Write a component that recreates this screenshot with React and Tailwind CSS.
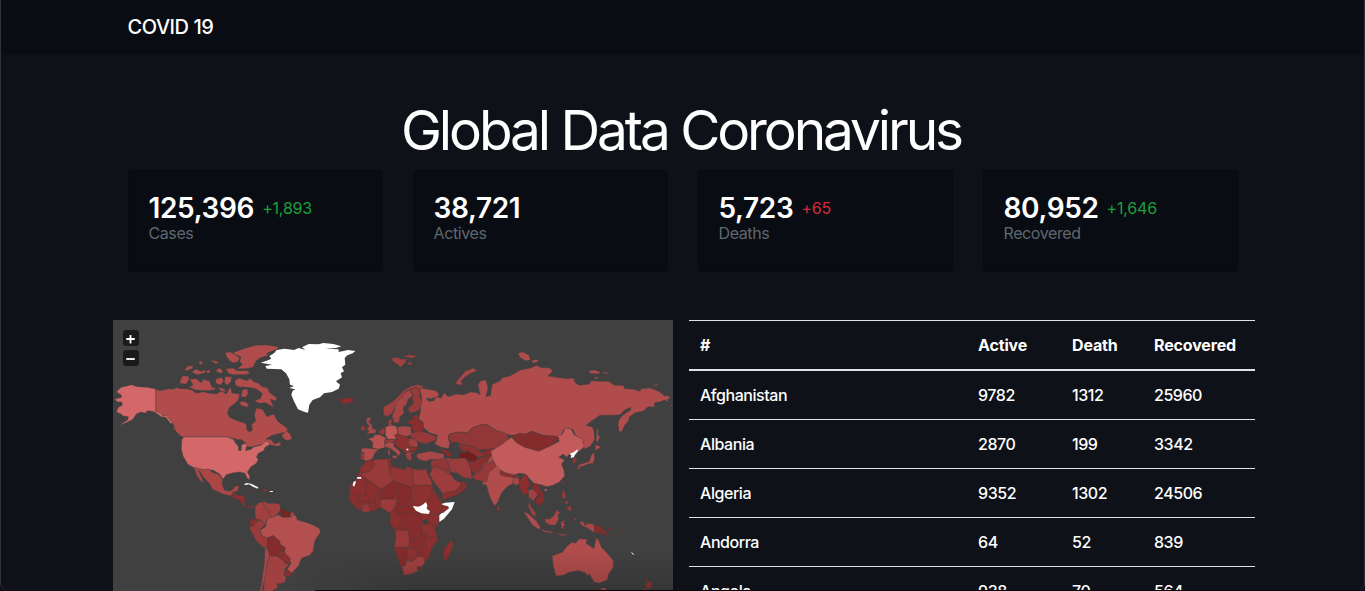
import React from "react";

const STATS = [
  { value: "125,396", delta: "+1,893", tone: "text-[#1ea03a]", label: "Cases" },
  { value: "38,721", label: "Actives" },
  { value: "5,723", delta: "+65", tone: "text-[#d22d3d]", label: "Deaths" },
  { value: "80,952", delta: "+1,646", tone: "text-[#1ea03a]", label: "Recovered" },
];

const ROWS = [
  ["Afghanistan", 9782, 1312, 25960],
  ["Albania", 2870, 199, 3342],
  ["Algeria", 9352, 1302, 24506],
  ["Andorra", 64, 52, 839],
  ["Angola", 938, 70, 564],
];

// Each region is a sheet of [fill, polygon points...] placed at its own offset.
const SHEETS = [
  {
    // North America
    at: "translate(0 0)",
    shapes: [
      ["#b04c4c", "128,207 142,212 168,206 180,208 190,203 204,206 222,206 238,211 250,220 270,215 285,219 310,222 325,213 340,222 352,200 358,220 380,222 376,240 366,250 350,262 343,280 350,292 372,302 392,308 400,312 402,330 410,336 418,330 416,314 428,302 424,284 430,264 448,268 462,290 482,282 494,304 522,324 524,336 502,340 478,346 458,358 474,358 484,372 502,366 504,376 490,379 472,374 462,368 444,374 424,378 404,390 396,370 382,368 372,358 344,351 212,351 206,350 188,334 180,312 160,290 140,284 128,276"],
      ["#b04c4c", "506,346 520,332 532,342 537,356 524,362 512,356"],
      ["#b04c4c", "360,98 392,86 428,76 460,75 496,80 492,88 460,100 466,106 440,114 430,122 420,142 398,146 372,146 388,134 380,124 384,110 366,104"],
      ["#b04c4c", "336,98 352,96 368,106 380,114 374,126 360,128 350,122 342,112"],
      ["#b04c4c", "338,146 360,144 372,152 404,152 411,160 396,164 360,164 346,160"],
      ["#b04c4c", "199,190 208,168 226,168 228,178 220,192"],
      ["#b04c4c", "230,178 250,176 264,188 272,178 290,184 296,200 312,208 286,212 248,210 228,202 240,194"],
      ["#b04c4c", "214,150 226,138 242,137 236,146 222,152"],
      ["#b04c4c", "236,156 248,148 264,154 278,150 276,158 252,164"],
      ["#b04c4c", "294,120 312,124 318,131 304,130"],
      ["#b04c4c", "309,150 320,144 330,152 326,160 314,158"],
      ["#b04c4c", "259,124 269,125 266,134 258,131"],
      ["#b04c4c", "279,153 289,149 292,158 282,159"],
      ["#b04c4c", "308,178 326,172 332,182 324,195 308,190"],
      ["#b04c4c", "336,170 356,170 354,184 344,196 334,188"],
      ["#b04c4c", "316,202 334,206 338,216 322,212"],
      ["#b04c4c", "366,182 378,174 402,182 412,174 420,184 436,190 448,200 464,204 470,218 492,234 488,242 472,238 482,262 458,248 438,250 424,242 442,236 448,220 428,206 406,202 376,200 366,194"],
      ["#b04c4c", "388,210 402,206 406,220 398,232 384,230"],
      ["#b04c4c", "380,246 392,244 408,252 402,262 384,256"],
      ["#d46868", "128,207 104,202 74,200 55,194 42,198 24,202 10,216 24,224 26,232 4,238 14,246 26,246 28,256 16,262 10,276 24,282 30,288 46,290 44,300 18,316 40,308 60,298 70,282 84,276 96,280 104,272 118,274 128,278 144,290 158,292 174,312 178,308 160,286 150,288 142,278 128,274"],
      ["#b04c4c", "180,314 188,334 204,350 212,356 198,346 182,328"],
      ["#d46868", "212,351 344,351 360,358 376,364 386,362 378,374 376,390 384,392 386,374 396,370 404,380 424,380 444,376 458,364 468,366 470,374 456,382 452,392 436,400 430,412 436,418 430,430 414,440 403,456 410,468 410,480 402,474 396,460 380,456 362,458 340,464 330,478 320,462 300,450 270,450 242,443 224,432 210,408 205,388 206,360"],
      ["#404040", "362,362 382,358 398,368 386,372 378,382 372,374"],
      ["#404040", "400,380 422,382 414,388 398,392"],
    ],
  },
  {
    // Central and South America
    at: "translate(0 390)",
    shapes: [
      ["#aa4646", "242,52 274,59 288,57 300,68 316,72 328,86 328,104 334,120 350,124 360,118 366,109 379,108 374,123 360,126 354,138 330,132 298,118 292,104 270,80 262,66 256,60 268,86 272,100 262,92 252,78"],
      ["#8a2e2e", "358,130 368,124 370,136 388,136 396,142 394,160 404,170 422,166 424,173 406,174 390,166 380,152 358,142"],
      ["#a04040", "426,170 438,158 454,155 452,166 468,172 470,186 478,204 462,206 458,224 446,210 428,208 426,190"],
      ["#a04040", "452,154 466,160 484,160 500,162 504,178 496,190 480,202 472,200 468,182 454,174"],
      ["#7c2424", "502,176 514,178 520,186 534,186 534,198 512,204 504,192"],
      ["#a64848", "534,186 544,190 544,202 532,200"],
      ["#8a2e2e", "412,208 432,206 434,212 420,228 410,230"],
      ["#9a3b3b", "408,232 420,228 434,212 446,210 458,222 442,238 446,256 464,262 464,290 454,294 430,274"],
      ["#b44f4f", "462,206 476,202 496,194 508,202 530,202 546,194 554,210 576,216 602,226 620,236 622,248 606,270 600,304 590,316 566,324 556,348 536,370 522,358 534,340 526,324 514,310 516,292 502,284 498,272 480,258 464,264 446,256 442,240 458,230"],
      ["#842b2b", "464,264 480,256 500,274 502,284 516,292 514,306 498,302 494,318 470,318 462,294"],
      ["#8a2e2e", "494,314 500,302 514,306 526,320 532,324 530,340 516,340"],
      ["#a04040", "470,318 494,318 512,334 518,342 530,340 516,356 514,374 520,384 514,398 492,402 494,412 480,422 476,450 450,450 454,390 460,350 466,330"],
      ["#a84646", "456,292 464,296 470,318 462,342 456,384 448,414 448,450 436,450 446,396 454,340"],
      ["#8a2e2e", "516,358 538,370 530,380 514,376"],
      ["#ffffff", "392,102 404,99 418,103 436,112 434,116 420,110 408,103 398,105"],
      ["#ffffff", "470,123 480,123 479,126 471,126"],
      ["#8a2e2e", "448,119 456,117 467,122 458,125 448,123"],
      ["#8a2e2e", "420,124 427,124 427,127 420,127"],
      ["#b04c4c", "57,116 60,117 59,120 57,119"],
    ],
  },
  {
    // North Atlantic
    at: "translate(381 30)",
    shapes: [
      ["#ffffff", "62,98 80,92 94,86 88,78 102,70 110,60 134,56 162,60 176,54 196,60 186,52 206,42 236,43 250,39 280,42 304,49 288,54 256,56 296,58 296,66 324,60 346,63 338,70 322,76 314,84 316,104 306,112 312,124 302,130 306,142 288,154 300,164 296,176 276,186 252,190 240,202 218,210 208,224 204,248 194,246 174,238 162,214 154,194 158,182 166,178 148,174 162,168 150,164 148,148 138,130 124,118 80,116 76,108 96,104"],
      ["#8a2e2e", "293,205 306,208 320,203 338,204 340,214 322,222 304,220 302,212"],
      ["#a04040", "455,84 472,82 484,88 500,86 496,98 482,112 468,100 458,94"],
      ["#a04040", "488,78 510,74 534,79 514,85"],
      ["#a04040", "502,98 514,96 516,104 504,104"],
    ],
  },
  {
    // Russia, Europe and Central Asia
    at: "translate(681 150)",
    shapes: [
      ["#b04c4c", "238,52 252,56 264,58 286,62 298,72 292,82 270,86 258,84 266,94 282,92 288,80 304,84 312,68 324,80 350,72 372,74 392,66 412,68 420,74 414,44 422,32 438,30 444,54 438,80 452,76 456,44 468,38 484,30 484,24 510,18 542,0 572,-6 590,-14 600,-8 630,-6 638,4 624,18 650,22 682,26 700,24 706,38 718,46 748,42 754,32 780,34 806,34 824,46 850,46 854,56 880,58 900,64 904,56 930,54 956,64 974,78 984,76 991,85 982,88 984,96 974,90 958,96 944,98 942,112 924,110 910,124 886,128 868,140 866,152 854,166 846,184 838,186 834,166 836,150 848,136 872,120 872,112 854,120 840,134 816,136 780,136 756,152 738,166 758,172 762,182 764,208 752,228 736,236 728,230 730,214 722,206 706,196 700,180 684,174 670,180 664,196 650,202 610,196 575,184 550,196 514,196 484,188 470,182 442,164 424,164 396,174 382,188 354,186 328,192 324,204 330,220 326,236 304,232 284,222 290,208 292,196 268,188 248,170 250,158 236,146 242,120 240,100 246,86 242,70"],
      ["#a84646", "346,38 362,20 376,4 400,-6 412,2 392,10 374,22 362,34 370,44 354,44"],
      ["#b04c4c", "534,-50 548,-54 566,-46 572,-30 556,-28 540,-38"],
      ["#b04c4c", "574,-28 590,-32 596,-26 580,-20"],
      ["#b04c4c", "746,2 764,0 780,6 776,12 750,10"],
      ["#b04c4c", "788,6 806,8 804,12 790,10"],
      ["#b04c4c", "762,22 774,20 774,26 764,26"],
      ["#b04c4c", "942,44 954,42 952,47 942,47"],
      ["#b04c4c", "990,104 996,104 996,108 991,107"],
      ["#b04c4c", "770,174 775,180 774,196 780,198 774,216 768,212 770,196"],
      ["#a04040", "130,112 140,106 160,94 176,78 190,62 214,48 236,44 250,48 244,58 228,52 210,58 196,66 184,84 168,100 160,124 152,134 136,140 130,130"],
      ["#a64545", "196,66 210,60 218,78 204,88 200,102 190,112 192,130 180,140 176,158 162,158 156,138 164,120 166,100 184,82"],
      ["#983a3a", "210,58 228,52 238,56 240,80 246,96 240,118 226,126 208,128 204,114 222,98 216,86 220,76"],
      ["#a04040", "146,150 156,148 154,160 160,168 144,166"],
      ["#8a2e2e", "216,138 234,134 236,150 250,160 250,184 226,188 212,172 218,164 204,162 206,150 220,150"],
      ["#a64848", "78,146 90,140 92,150 86,156 96,164 98,176 110,180 106,190 78,192 88,184 80,176 88,168 80,160"],
      ["#963838", "62,170 74,166 76,180 64,184"],
      ["#c05858", "136,172 150,166 168,168 172,180 172,192 164,196 170,208 144,208 136,196"],
      ["#a84848", "172,172 190,168 212,170 214,182 214,196 196,200 174,192"],
      ["#983939", "118,182 130,174 136,178 132,196 118,190"],
      ["#b85151", "84,206 100,202 104,194 120,194 138,204 134,218 136,232 116,238 98,234 98,216"],
      ["#b04c4c", "64,236 76,234 116,238 104,250 96,268 82,274 68,268 72,248 64,246"],
      ["#983939", "63,246 73,248 70,270 62,268"],
      ["#983939", "134,210 146,208 164,208 170,214 148,220 134,220"],
      ["#b04c4c", "134,222 148,216 164,220 160,228 178,242 182,250 176,258 166,246 152,236 136,230"],
      ["#b04c4c", "156,258 172,256 168,266 156,262"],
      ["#b04c4c", "144,240 149,238 150,256 145,256"],
      ["#8d3030", "164,196 174,192 196,200 210,206 206,224 228,234 226,242 212,246 204,248 198,252 192,242 180,236 166,226 162,214 172,208"],
      ["#a04040", "208,206 226,206 234,220 232,232 212,230 204,220"],
      ["#8d3030", "206,232 232,232 228,244 208,244"],
      ["#a04040", "196,252 206,246 224,248 212,254 216,266 210,272 200,264"],
      ["#983939", "214,190 226,186 252,186 270,192 290,200 286,212 270,216 260,222 244,218 232,214 224,206 212,204"],
      ["#a84747", "230,252 250,248 270,244 292,248 312,252 312,266 294,270 274,268 256,274 236,268 230,260"],
      ["#862b2b", "298,236 318,240 330,246 336,256 326,262 314,252"],
      ["#923737", "324,204 330,192 354,186 382,188 396,174 424,164 442,164 470,182 494,188 504,196 506,210 490,222 478,236 440,238 418,240 400,230 382,228 368,222 360,236 352,222 338,220"],
      ["#8d3131", "368,222 382,228 400,230 412,236 426,250 436,242 444,256 414,262 384,246 366,244 362,236"],
      ["#741d1d", "356,248 374,250 382,242 400,252 412,264 400,278 380,266 358,264"],
      ["#842b2b", "436,240 456,236 480,238 470,248 450,256 462,264 436,268 424,262 440,256 428,250"],
      ["#8a2e2e", "388,272 404,276 416,264 440,262 450,268 430,280 424,298 404,310 392,300"],
      ["#983939", "404,310 424,298 430,280 454,268 460,286 448,306 430,326 400,320"],
      ["#a04040", "312,266 332,264 342,270 358,272 356,264 380,268 388,280 392,310 400,324 372,324 352,310 334,306 324,288"],
      ["#923737", "274,272 296,270 316,270 328,290 332,312 314,324 292,310 274,300"],
    ],
  },
  {
    // East Asia and Oceania
    at: "translate(1161 420)",
    shapes: [
      ["#b04c4c", "-46,24 -30,-10 -6,-20 4,16 40,42 56,48 44,68 24,78 6,96 0,110 -6,126 -16,138 -28,118 -36,94 -40,76 -54,72 -44,50"],
      ["#c45b5b", "-28,-26 -12,-36 2,-44 34,-68 46,-56 74,-40 116,-28 150,-42 178,-56 170,-72 186,-76 196,-96 212,-94 222,-76 248,-62 252,-40 238,-26 208,-18 200,-8 190,-18 176,-8 194,0 184,12 192,30 194,48 178,66 158,76 140,80 124,74 104,72 90,58 76,42 58,40 44,44 16,38 0,28 -20,8"],
      ["#842b2b", "36,-72 58,-80 82,-78 92,-86 126,-74 168,-72 178,-66 170,-56 150,-42 116,-26 74,-38 50,-52"],
      ["#8a2e2e", "0,32 14,38 38,46 52,46 50,54 20,50 0,44"],
      ["#a84646", "40,54 56,54 60,70 48,76 38,70"],
      ["#8a2e2e", "58,64 66,54 70,44 82,46 84,60 92,72 82,88 86,102 72,104 60,88"],
      ["#a04040", "84,92 98,86 108,92 118,98 104,116 100,124 90,114 88,128 94,142 106,156 108,172 96,164 84,138 88,122"],
      ["#842b2b", "94,76 108,70 124,78 118,84 132,104 132,124 120,138 104,126 106,114 120,110 104,94"],
      ["#c45b5b", "132,88 142,87 140,93 134,94"],
      ["#b04c4c", "71,155 84,160 110,184 122,204 116,208 98,196"],
      ["#a84646", "118,207 138,212 158,215 158,220 132,216"],
      ["#a84646", "166,218 186,222 208,226 186,227"],
      ["#a84646", "134,178 150,176 162,166 170,150 180,158 174,166 176,178 166,196 148,194 138,188"],
      ["#a84646", "182,186 198,181 190,190 198,196 190,198 190,208 184,204"],
      ["#983939", "186,94 194,93 198,110 190,120 186,108"],
      ["#983939", "198,146 210,136 216,146 212,154"],
      ["#983939", "194,122 204,122 204,134 196,132"],
      ["#8a2e2e", "186,68 194,62 192,76"],
      ["#a84646", "222,172 228,178 224,184"],
      ["#a84646", "238,183 252,186 254,196 266,190 284,194 284,219 262,204 244,196"],
      ["#842b2b", "284,194 300,198 316,214 328,230 302,218 284,220"],
      ["#842b2b", "322,206 336,202 334,209 324,211"],
      ["#842b2b", "346,208 354,212 350,214"],
      ["#b04c4c", "156,288 188,276 198,262 216,246 226,250 238,236 262,238 258,250 282,266 288,234 296,240 304,262 322,280 340,302 340,322 326,342 322,360 296,370 282,366 274,352 268,342 262,348 256,338 236,332 208,336 190,346 168,348 160,320"],
      ["#b04c4c", "302,384 318,384 316,394 308,396"],
      ["#8f3434", "434,350 446,364 458,368 452,384 440,388 436,376 442,370"],
      ["#8f3434", "430,386 438,384 434,400 424,396"],
      ["#ffffff", "392,276 398,279 404,286 398,283"],
      ["#8f3434", "454,264 460,264 458,268"],
      ["#ffffff", "208,-18 222,-24 232,-32 234,-26 224,-14 222,-8 212,-6 214,-14"],
      ["#8f3434", "218,-6 226,-8 230,6 218,12"],
      ["#b04c4c", "232,24 238,14 256,8 268,4 274,-16 282,-22 284,-6 280,10 262,12 252,18 240,20 236,30"],
      ["#b04c4c", "286,-46 302,-40 296,-34 284,-28 286,-36"],
      ["#983939", "-8,136 -4,140 0,150 -6,154 -8,146"],
    ],
  },
  {
    // Africa and the Middle East
    at: "translate(681 420)",
    shapes: [
      ["#8a2e2e", "60,26 78,4 104,-2 140,-4 154,-6 152,14 168,22 194,30 202,20 218,26 240,30 260,28 262,42 272,58 276,80 290,102 304,124 312,134 326,138 300,166 294,184 292,200 284,204 290,222 292,242 276,262 268,292 250,312 232,334 214,342 192,346 186,330 180,316 162,262 168,232 162,206 150,192 152,172 148,156 120,144 98,150 68,156 46,142 26,118 30,86 28,80 50,58"],
      ["#8d3030", "60,26 78,4 98,0 104,18 84,36 66,38"],
      ["#983a3a", "66,38 84,36 104,18 98,0 144,-4 150,34 160,62 124,88 66,46"],
      ["#8d3030", "144,-6 154,-6 152,14 156,24 148,28"],
      ["#943535", "152,24 168,22 194,30 202,20 218,26 220,84 160,62 150,42"],
      ["#9c3b3b", "218,26 240,30 260,28 262,42 272,58 278,76 220,76"],
      ["#8a2e2e", "28,84 40,80 50,58 64,54 78,60 78,106 46,108 32,104"],
      ["#8a2e2e", "78,60 124,88 118,100 92,108 86,124 66,128 58,110 78,106"],
      ["#842b2b", "124,88 160,62 174,68 172,104 148,118 120,114"],
      ["#842b2b", "174,68 220,82 212,104 212,124 184,142 174,130"],
      ["#8d3030", "220,76 278,76 276,104 262,128 240,136 218,130 212,108"],
      ["#9c3b3b", "122,118 172,118 162,144 148,158 122,142"],
      ["#842b2b", "164,148 174,130 184,142 216,134 240,160 206,162 172,166"],
      ["#8a2e2e", "274,102 288,110 304,130 326,142 306,160 280,164 264,148 262,130"],
      ["#8a2e2e", "264,162 298,164 296,186 290,198 264,184"],
      ["#862c2c", "184,162 206,156 246,166 242,200 246,222 234,238 208,234 204,210 168,208 182,190"],
      ["#983939", "166,210 204,212 208,236 206,262 162,262 168,236"],
      ["#842b2b", "162,262 206,262 202,292 196,318 182,316"],
      ["#8d3030", "202,266 222,266 234,282 214,306 200,300"],
      ["#862c2c", "226,268 244,254 258,256 258,274 246,288 234,282"],
      ["#862c2c", "210,238 234,238 244,222 258,228 258,242 238,250 222,264 208,258"],
      ["#a04040", "186,318 196,318 200,300 214,306 234,290 252,292 254,310 232,334 214,342 192,346"],
      ["#7e2828", "230,322 238,318 242,324 234,330"],
      ["#8d3030", "246,196 264,190 284,204 290,228 268,230 246,218"],
      ["#8a2e2e", "334,240 340,254 328,286 318,302 310,296 310,272 322,254"],
      ["#404040", "246,182 260,178 264,188 252,194"],
      ["#8a2e2e", "48,130 50,120 68,128 84,126 98,132 104,112 112,150 68,156"],
      ["#983939", "66,138 80,132 90,140 88,156 68,156"],
      ["#8a2e2e", "90,132 106,126 108,150 90,154"],
      ["#ffffff", "218,138 236,140 248,134 258,126 262,136 260,146 270,154 266,162 244,160 228,152"],
      ["#ffffff", "304,132 316,128 344,126 336,148 312,176 298,186 298,166 312,152 328,144"],
      ["#8a2e2e", "306,138 322,138 326,144 310,158 300,158"],
      ["#ffffff", "38,76 40,66 48,62 46,72 42,80"],
      ["#ffffff", "50,56 52,51 64,51 64,56"],
      ["#923737", "272,4 292,-2 318,-6 328,18 322,30 302,26 286,16 274,24"],
      ["#9c3c3c", "268,42 280,24 296,24 322,40 334,44 344,60 364,68 358,88 336,96 308,102 296,84 284,70"],
      ["#8a2e2e", "306,102 336,94 348,94 364,72 366,62 382,74 374,90 352,104 308,120"],
      ["#9c3c3c", "324,4 340,-4 376,-6 392,24 396,58 372,52 340,30 328,20"],
      ["#963838", "396,50 420,36 436,14 460,0 468,18 446,38 440,66 424,64 408,60"],
    ],
  },
];

function WorldMap() {
  return (
    <svg viewBox="0 0 1680 813" className="block h-[271px] w-[560px]">
      {SHEETS.map((sheet) => (
        <g key={sheet.at} transform={sheet.at} stroke="#404040" strokeOpacity="0.5" strokeWidth="2.4" strokeLinejoin="round">
          {sheet.shapes.map(([fill, points], i) => (
            <polygon key={i} points={points} fill={fill} stroke={fill === "#ffffff" ? "none" : undefined} />
          ))}
        </g>
      ))}
      <g fill="#404040">
        <polygon points="1008,376 1022,366 1036,366 1044,374 1030,378 1038,396 1040,412 1028,416 1018,400 1008,390" />
      </g>
      <rect x="881" y="386" width="5" height="5" fill="#fff" />
    </svg>
  );
}

function ZoomButton({ plus }) {
  return (
    <button className="flex size-4 items-center justify-center rounded-[3px] bg-[#1a1a1a]" aria-label={plus ? "Zoom in" : "Zoom out"}>
      <svg viewBox="0 0 16 16" className="size-4" stroke="#fff" strokeWidth="1.8">
        <path d={plus ? "M3.2 9h8.6M7.5 5v8.4" : "M3.2 9h8.6"} />
      </svg>
    </button>
  );
}

function StatCard({ value, delta, tone, label }) {
  return (
    <div className="h-[102px] w-[255px] rounded-[4px] border border-[#080a0f] bg-[#090c13] px-[19.5px] pt-5">
      <div className="flex h-[34px] items-center gap-2">
        <span className="text-[28px] font-semibold tracking-[-0.35px]">{value}</span>
        {delta && <span className={"text-base tracking-[-0.2px] " + tone}>{delta}</span>}
      </div>
      <div className="-mt-1 text-base leading-6 tracking-[-0.4px] text-[#5f676f]">{label}</div>
    </div>
  );
}

export default function App() {
  return (
    <div className="h-[591px] w-[1365px] bg-[#100a12]">
      <div className="relative h-[591px] w-[1365px] overflow-hidden rounded-b-lg border-x border-[#303339] bg-[#0e1118] font-['Inter','Liberation_Sans',sans-serif] text-white">
        <header className="flex h-[55px] items-center bg-[#090c13] pb-0.5 pl-[126.5px]">
          <span className="text-xl font-[450] tracking-[-0.45px]">COVID 19</span>
        </header>
        <main>
          <h1 className="mt-[42px] pr-[3px] text-center text-[55px] leading-[66px] font-normal tracking-[-3.1px]">Global Data Coronavirus</h1>
          <section className="mt-[7px] ml-[127px] flex gap-[30px]">
            {STATS.map((s) => (
              <StatCard key={s.label} {...s} />
            ))}
          </section>
          <section className="mt-12 ml-[112px] flex gap-4">
            <div className="relative h-[271px] w-[560px] shrink-0 bg-[#404040]">
              <WorldMap />
              <div className="absolute right-0 bottom-0 h-10 w-[380px] bg-linear-to-t from-black/15 to-transparent mask-l-from-70% mask-l-to-100%" />
              <div className="absolute top-[10px] left-[10px] flex flex-col gap-1">
                <ZoomButton plus />
                <ZoomButton />
              </div>
            </div>
            <table className="w-[566px] shrink-0 table-fixed border-collapse self-start text-left text-base leading-6">
              <colgroup>
                <col className="w-[278px]" />
                <col className="w-[94px]" />
                <col className="w-[82px]" />
                <col className="w-[112px]" />
              </colgroup>
              <thead>
                <tr className="h-[49px] border-t border-b-2 border-[#dee2e6] tracking-[-0.15px]">
                  {["#", "Active", "Death", "Recovered"].map((h) => (
                    <th key={h} className="p-0 pl-[11px] font-bold">{h}</th>
                  ))}
                </tr>
              </thead>
              <tbody>
                {ROWS.map((row) => (
                  <tr key={row[0]} className="h-[49px] border-b border-[#dee2e6] font-[450] tracking-[-0.45px] first:h-[50px]">
                    {row.map((cell, i) => (
                      <td key={i} className="p-0 pl-[11px]">{cell}</td>
                    ))}
                  </tr>
                ))}
              </tbody>
            </table>
          </section>
        </main>
        <div className="absolute bottom-0 left-[314px] h-px w-[1051px] bg-[#08060a]" />
      </div>
    </div>
  );
}
